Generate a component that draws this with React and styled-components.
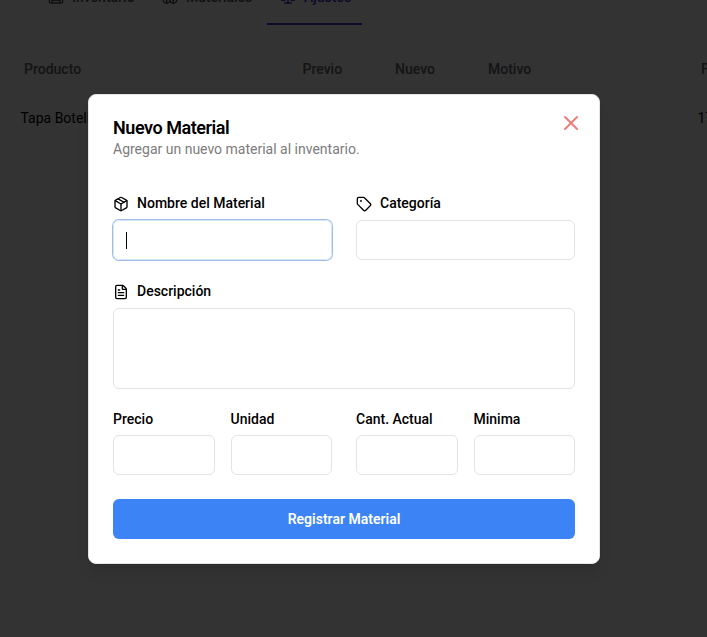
import React from "react";
import styled, { createGlobalStyle } from "styled-components";
import { Package, Tag, FileText, Warehouse, Boxes, Scale, X } from "lucide-react";

const GlobalStyle = createGlobalStyle`
  *, *::before, *::after { box-sizing: border-box; }
  body { margin: 0; overflow: hidden; font-family: Roboto, sans-serif; font-size: 14px; line-height: 20px; color: #000; }
`;

const Page = styled.div`
  position: relative;
  width: 707px;
  height: 637px;
  overflow: hidden;
  background: #fff;
`;

const Tabs = styled.nav`
  display: flex;
  height: 52px;
  margin-top: -27px;
  padding-left: 35px;
`;

const Tab = styled.div`
  display: flex;
  align-items: center;
  gap: 8px;
  width: ${(p) => p.$width}px;
  padding: 0 13px 3px;
  border-bottom: 2px solid ${(p) => (p.$active ? "#3c38c4" : "transparent")};
  color: ${(p) => (p.$active ? "#3c38c4" : "#525252")};
  font-weight: 500;
  white-space: nowrap;
  svg { flex: none; }
`;

const TableRow = styled.div`
  display: grid;
  grid-template-columns: 278.5px 92.5px 93px 213px 60px;
  align-items: center;
  height: 48px;
  margin-top: ${(p) => (p.$head ? 20 : 1)}px;
  padding-left: ${(p) => (p.$head ? 24 : 20.5)}px;
  color: ${(p) => (p.$head ? "#65656a" : "#000")};
  font-weight: ${(p) => (p.$head ? 500 : 400)};
  white-space: nowrap;
`;

const LastCell = styled.span`
  grid-column: 5;
`;

const Overlay = styled.div`
  position: absolute;
  inset: 0;
  display: flex;
  align-items: flex-start;
  padding: 94px 0 0 88px;
  background: rgba(0, 0, 0, 0.8);
`;

const Dialog = styled.section`
  width: 512px;
  height: 470px;
  padding: 24px;
  border: 1px solid #e4e4e7;
  border-radius: 8px;
  background: #fff;
  box-shadow: 0 10px 15px -3px rgba(0, 0, 0, 0.1), 0 4px 6px -4px rgba(0, 0, 0, 0.1);
`;

const DialogHeader = styled.header`
  display: flex;
  justify-content: space-between;
  height: 74px;
`;

const Title = styled.h2`
  margin: 0;
  font-size: 18px;
  line-height: 18px;
  font-weight: 600;
  letter-spacing: -0.45px;
`;

const Subtitle = styled.p`
  margin: 2px 0 0;
  color: #7c7c7c;
`;

const CloseButton = styled.button`
  display: flex;
  width: 24px;
  height: 24px;
  margin: -8px -8px 0 0;
  padding: 0;
  border: 0;
  background: none;
  color: #ee7c79;
`;

const FieldRow = styled.div`
  display: grid;
  grid-template-columns: ${(p) => p.$columns};
  margin-bottom: ${(p) => p.$bottom}px;
`;

const Field = styled.div`
  grid-column: ${(p) => p.$column};
  min-width: 0;
`;

const Label = styled.label`
  display: flex;
  align-items: center;
  gap: 8px;
  height: 20px;
  margin-bottom: ${(p) => p.$gap ?? 7}px;
  font-weight: 500;
  svg { margin-top: 2px; }
`;

const Input = styled.div`
  display: flex;
  align-items: center;
  height: ${(p) => p.$height ?? 40}px;
  padding-left: 12px;
  border: 1px solid ${(p) => (p.$focused ? "#dbe7f8" : "#e4e4e7")};
  border-radius: 6px;
  box-shadow: ${(p) => (p.$focused ? "0 0 0 1px #9dbce8" : "none")};
`;

const Caret = styled.span`
  width: 1px;
  height: 17px;
  background: #000;
`;

const SubmitButton = styled.button`
  display: block;
  width: 100%;
  height: 40px;
  padding: 0;
  border: 0;
  border-radius: 6px;
  background: #3c83f6;
  color: #fff;
  font: 600 14px/20px Roboto, sans-serif;
`;

export default function App() {
  return (
    <Page>
      <GlobalStyle />
      <Tabs>
        <Tab $width={114}><Warehouse size={16} />Inventario</Tab>
        <Tab $width={118}><Boxes size={16} />Materiales</Tab>
        <Tab $width={95} $active><Scale size={16} />Ajustes</Tab>
      </Tabs>
      <TableRow $head>
        <span>Producto</span><span>Previo</span><span>Nuevo</span><span>Motivo</span><span>Fecha</span>
      </TableRow>
      <TableRow>
        <span>Tapa Botella</span><LastCell>17</LastCell>
      </TableRow>
      <Overlay>
        <Dialog>
          <DialogHeader>
            <div>
              <Title>Nuevo Material</Title>
              <Subtitle>Agregar un nuevo material al inventario.</Subtitle>
            </div>
            <CloseButton aria-label="Cerrar"><X size={24} strokeWidth={2} /></CloseButton>
          </DialogHeader>
          <FieldRow $columns="219px 24px 219px" $bottom={21}>
            <Field $column={1}>
              <Label><Package size={16} />Nombre del Material</Label>
              <Input $focused><Caret /></Input>
            </Field>
            <Field $column={3}>
              <Label><Tag size={16} />Categoría</Label>
              <Input />
            </Field>
          </FieldRow>
          <FieldRow $columns="462px" $bottom={20}>
            <Field $column={1}>
              <Label><FileText size={16} />Descripción</Label>
              <Input $height={81} />
            </Field>
          </FieldRow>
          <FieldRow $columns="101.5px 16px 101.5px 24px 101.5px 16px 101.5px" $bottom={24}>
            {["Precio", "Unidad", "Cant. Actual", "Minima"].map((name, i) => (
              <Field key={name} $column={i * 2 + 1}>
                <Label $gap={6}>{name}</Label>
                <Input />
              </Field>
            ))}
          </FieldRow>
          <SubmitButton>Registrar Material</SubmitButton>
        </Dialog>
      </Overlay>
    </Page>
  );
}
